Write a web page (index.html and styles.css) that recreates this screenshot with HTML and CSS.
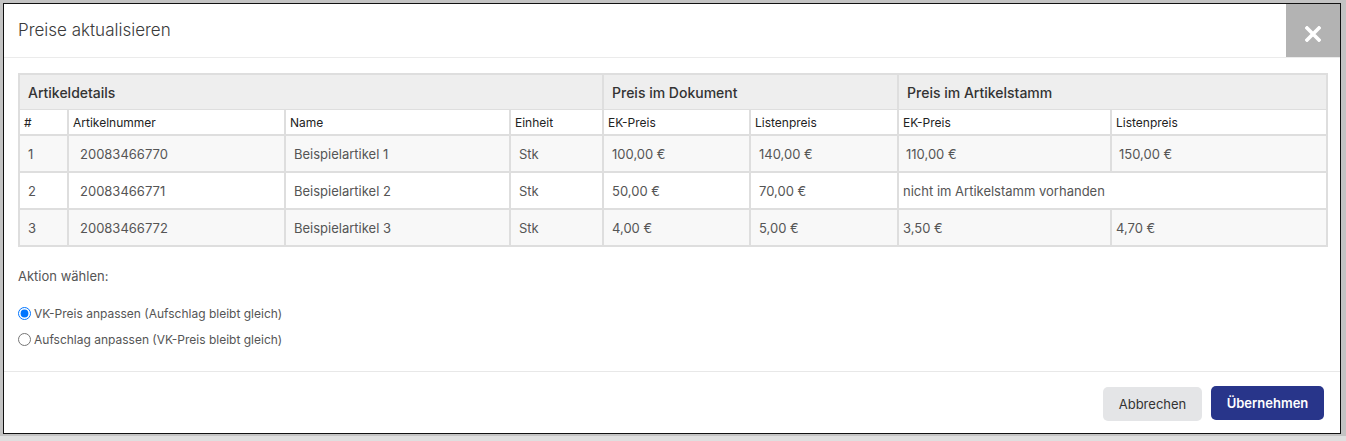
FILE: index.html
```html
<!DOCTYPE html>
<html lang="de">
<head>
    <meta charset="UTF-8">
    <title>Preise aktualisieren</title>
    <link rel="stylesheet" href="styles.css">
</head>
<body>

<div class="dialog">
    <div class="dialog-header">
        <h2>Preise aktualisieren</h2>
        <button class="close-btn" aria-label="Schließen">
            <svg width="16" height="16" viewBox="0 0 16 16">
                <path d="M2 2 L14 14 M14 2 L2 14" stroke="#fff" stroke-width="3.6" stroke-linecap="square"/>
            </svg>
        </button>
    </div>

    <div class="dialog-body">
        <table class="price-table">
            <colgroup>
                <col style="width:49px">
                <col style="width:217px">
                <col style="width:225px">
                <col style="width:93px">
                <col style="width:147px">
                <col style="width:148px">
                <col style="width:213px">
                <col style="width:216px">
            </colgroup>
            <thead>
                <tr class="group-row">
                    <th colspan="4">Artikeldetails</th>
                    <th colspan="2">Preis im Dokument</th>
                    <th colspan="2">Preis im Artikelstamm</th>
                </tr>
                <tr class="col-row">
                    <th>#</th>
                    <th>Artikelnummer</th>
                    <th>Name</th>
                    <th>Einheit</th>
                    <th>EK-Preis</th>
                    <th>Listenpreis</th>
                    <th>EK-Preis</th>
                    <th>Listenpreis</th>
                </tr>
            </thead>
            <tbody>
                <tr>
                    <td>1</td>
                    <td class="num">20083466770</td>
                    <td>Beispielartikel 1</td>
                    <td>Stk</td>
                    <td>100,00 €</td>
                    <td>140,00 €</td>
                    <td class="shift">110,00 €</td>
                    <td class="shift">150,00 €</td>
                </tr>
                <tr>
                    <td>2</td>
                    <td class="num">20083466771</td>
                    <td>Beispielartikel 2</td>
                    <td>Stk</td>
                    <td>50,00 €</td>
                    <td>70,00 €</td>
                    <td colspan="2" class="missing">nicht im Artikelstamm vorhanden</td>
                </tr>
                <tr>
                    <td>3</td>
                    <td class="num">20083466772</td>
                    <td>Beispielartikel 3</td>
                    <td>Stk</td>
                    <td>4,00 €</td>
                    <td>5,00 €</td>
                    <td class="missing">3,50 €</td>
                    <td class="missing">4,70 €</td>
                </tr>
            </tbody>
        </table>

        <p class="action-label">Aktion wählen:</p>

        <div class="options">
            <label class="option">
                <input type="radio" name="action" checked>
                VK-Preis anpassen (Aufschlag bleibt gleich)
            </label>
            <label class="option">
                <input type="radio" name="action">
                Aufschlag anpassen (VK-Preis bleibt gleich)
            </label>
        </div>
    </div>

    <div class="dialog-footer">
        <button class="btn btn-cancel">Abbrechen</button>
        <button class="btn btn-primary">Übernehmen</button>
    </div>
</div>

</body>
</html>
```

FILE: styles.css
```css
body {
    margin: 0;
    padding: 3px 0 0 3px;
    font-family: Inter, "Noto Sans", Arial, sans-serif;
    background: linear-gradient(to bottom, #c3c3c3 436px, #dfdfdf 436px);
    height: 441px;
    box-sizing: border-box;
    overflow: hidden;
}

.dialog {
    width: 1338px;
    height: 431px;
    box-sizing: border-box;
    background-color: #ffffff;
    border: 1px solid #111;
    display: flex;
    flex-direction: column;
}

.dialog-header {
    display: flex;
    justify-content: space-between;
    height: 53px;
    border-bottom: 1px solid #ebebeb;
}

.dialog-header h2 {
    margin: 0;
    padding-left: 14px;
    font-size: 17px;
    font-weight: 300;
    color: #3a3a3a;
    line-height: 53px;
}

.close-btn {
    width: 54px;
    height: 53px;
    border: none;
    padding: 6px 0 0 0;
    background-color: #b3b3b3;
    display: flex;
    justify-content: center;
    align-items: center;
    cursor: pointer;
}

.dialog-body {
    flex: 1;
    padding: 15px 13px 0 14px;
    border-bottom: 1px solid #e8e8e8;
}

.price-table {
    width: 1308px;
    table-layout: fixed;
    border-collapse: collapse;
    border: 2px solid #dedede;
}

.price-table th,
.price-table td {
    border: 2px solid #dedede;
    text-align: left;
    white-space: nowrap;
    overflow: hidden;
}

.group-row th {
    height: 34px;
    padding: 0 8px;
    background-color: #eeeeee;
    font-size: 14px;
    font-weight: 500;
    color: #333;
    border-bottom: 1px solid #dedede;
}

.col-row th {
    height: 24px;
    padding: 0 4px;
    font-size: 12px;
    font-weight: 400;
    color: #222;
    border-top: 1px solid #dedede;
    background-color: #fff;
}

.price-table td {
    height: 35px;
    padding: 0 8px;
    font-size: 13px;
    font-weight: 400;
    color: #555;
}

.price-table td.num {
    padding-left: 11px;
}

.price-table td.shift {
    padding-left: 7px;
}

.price-table td.missing {
    padding-left: 4px;
}

.price-table tbody tr:nth-child(odd) td {
    background-color: #f8f8f8;
}

.action-label {
    margin: 21px 0 0 0;
    font-size: 13px;
    font-weight: 400;
    line-height: 16px;
    color: #555;
}

.options {
    margin-top: 16px;
    display: flex;
    flex-direction: column;
}

.option {
    display: flex;
    align-items: center;
    height: 26px;
    font-size: 12px;
    font-weight: 400;
    color: #555;
}

.option input {
    margin: 0 3px 0 0;
    width: 13px;
    height: 13px;
}

.dialog-footer {
    display: flex;
    justify-content: flex-end;
    align-items: center;
    gap: 9px;
    height: 61px;
    padding-right: 16px;
}

.btn {
    font-family: Inter, "Noto Sans", Arial, sans-serif;
    font-size: 13px;
    height: 34px;
    border: none;
    border-radius: 5px;
    cursor: pointer;
}

.btn-cancel {
    width: 99px;
    margin-top: 2px;
    background-color: #e4e5e7;
    color: #333;
}

.btn-primary {
    width: 113px;
    background-color: #28358a;
    color: #fff;
    font-weight: 600;
}
```
